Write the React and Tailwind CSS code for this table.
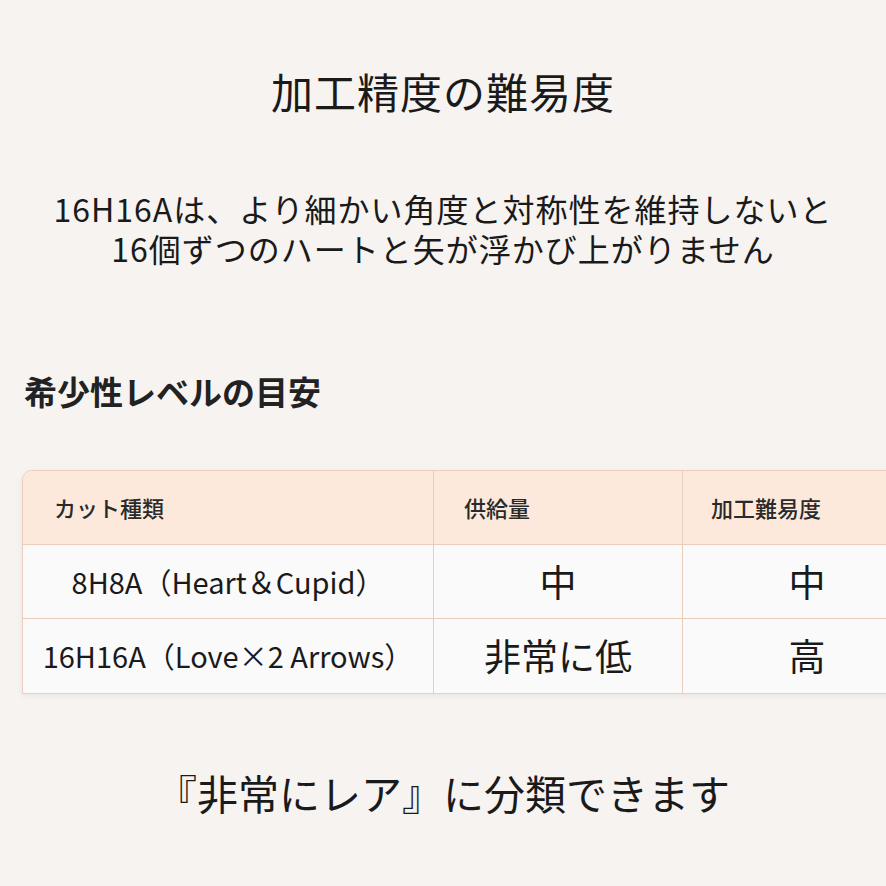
import React from 'react';

const font = { fontFamily: '"Noto Sans CJK JP", "Noto Sans", sans-serif' };

const rows = [
  { cut: '8H8A（Heart＆Cupid）', supply: '中', difficulty: '中' },
  { cut: '16H16A（Love×2 Arrows）', supply: '非常に低', difficulty: '高' },
];

export default function App() {
  return (
    <div
      className="w-[886px] h-[886px] overflow-hidden bg-[#f6f3f1] text-[#1a1a1a] flex flex-col"
      style={font}
    >
      <h1 className="mt-[64px] text-center text-[42px] leading-[54px] font-normal tracking-[1px]">
        加工精度の難易度
      </h1>

      <p className="mt-[70px] text-center text-[32px] leading-[40px] tracking-[1px]">
        16H16Aは、より細かい角度と対称性を維持しないと
        <br />
        16個ずつのハートと矢が浮かび上がりません
      </p>

      <h2 className="mt-[102px] ml-[24px] text-[33px] leading-[42px] font-bold text-[#222]">
        希少性レベルの目安
      </h2>

      <div className="mt-[58px] ml-[22px] w-[910px] shrink-0 rounded-tl-[10px] border border-[#ebcdbd] bg-[#fbfafa] shadow-[0_2px_6px_rgba(0,0,0,0.06)] overflow-hidden">
        <div className="grid grid-cols-[410px_249px_249px] h-[74px] bg-[#fde9dc] border-b border-[#ebcdbd]">
          <div className="flex items-center pl-[31px] text-[22px] font-medium text-[#2a2a2a]">カット種類</div>
          <div className="flex items-center pl-[30px] border-l border-[#ebcdbd] text-[22px] font-medium text-[#2a2a2a]">供給量</div>
          <div className="flex items-center pl-[28px] border-l border-[#ebcdbd] text-[22px] font-medium text-[#2a2a2a]">加工難易度</div>
        </div>
        {rows.map((r, i) => (
          <div
            key={i}
            className={`grid grid-cols-[410px_249px_249px] h-[74px] ${i === 0 ? 'border-b border-[#ebcdbd]' : ''}`}
          >
            <div className="flex items-center justify-center text-[29px] text-[#1a1a1a] whitespace-nowrap">{r.cut}</div>
            <div className="flex items-center justify-center border-l border-[#ebcdbd] text-[37px]">{r.supply}</div>
            <div className="flex items-center justify-center border-l border-[#ebcdbd] text-[37px]">{r.difficulty}</div>
          </div>
        ))}
      </div>

      <p className="mt-[73px] text-center text-[41px] leading-[50px]">
        『非常にレア』に分類できます
      </p>
    </div>
  );
}
